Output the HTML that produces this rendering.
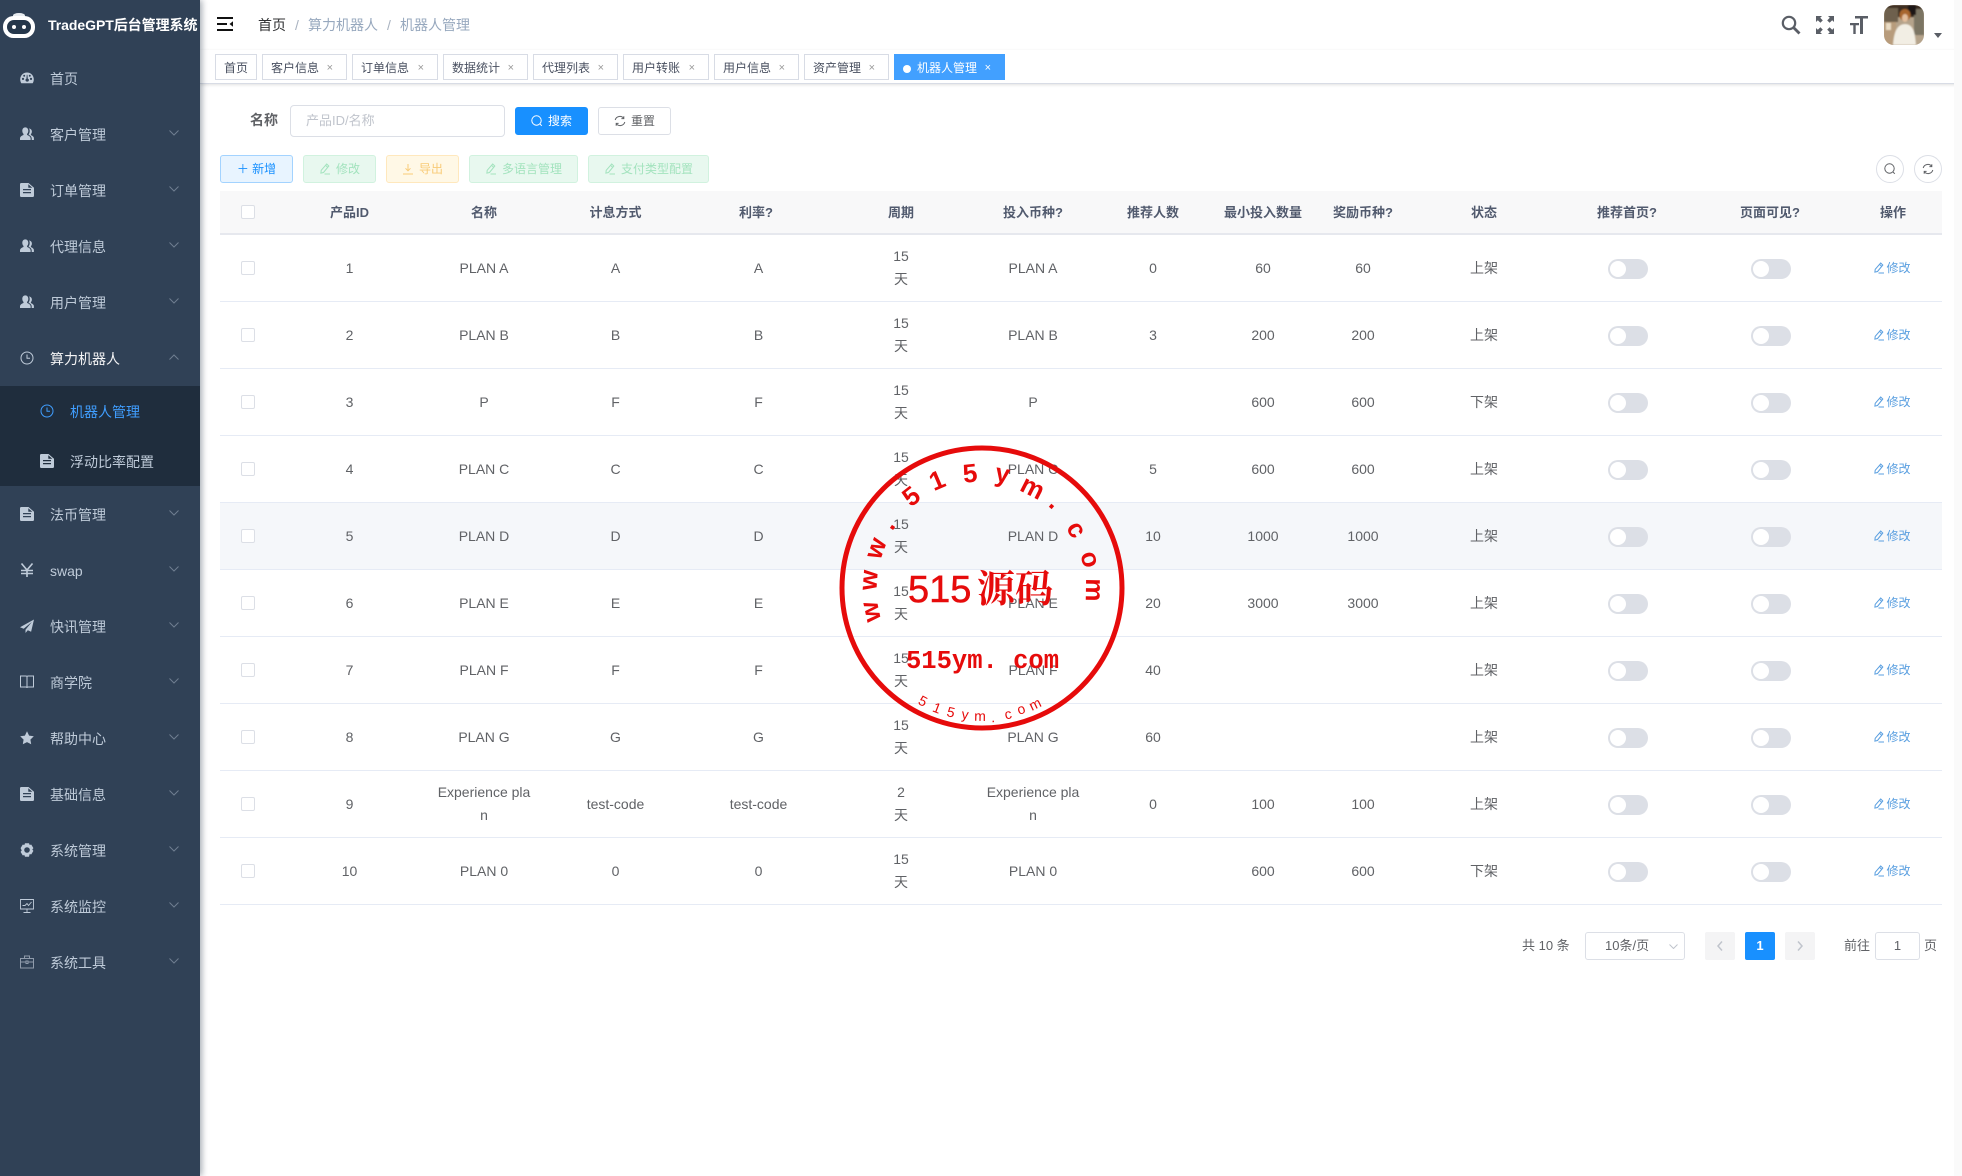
<!DOCTYPE html>
<html lang="zh">
<head>
<meta charset="utf-8">
<title>TradeGPT后台管理系统</title>
<style>
*{box-sizing:border-box}
html,body{margin:0;padding:0;width:1962px;height:1176px;overflow:hidden;background:#fff;font-family:"Liberation Sans","Noto Sans CJK SC",sans-serif;font-size:14px;color:#606266}
.abs,.side,.mi,.nav,.tags,.tag,.btn,.tb,.sw{position:absolute}
.side{left:0;top:0;width:200px;height:1176px;background:#304156;box-shadow:2px 0 6px rgba(0,21,41,.35);z-index:3}
.sub{position:absolute;left:0;top:386px;width:200px;height:100px;background:#1f2d3d}
.mi{left:50px;height:20px;line-height:20px;color:#bfcbd9;white-space:nowrap}
.ic{position:absolute;left:20px;width:14px;height:14px;fill:#bfcbd9;stroke:none}
.ch{position:absolute;left:169px;width:10px;height:6px;fill:none;stroke:#6f7e90;stroke-width:1}
.nav{left:200px;top:0;width:1762px;height:50px;background:#fff;box-shadow:0 1px 4px rgba(0,21,41,.08);z-index:1}
.tags{left:200px;top:50px;width:1762px;height:34px;background:#fff;border-bottom:1px solid #d8dce5;box-shadow:0 1px 3px rgba(0,0,0,.12);z-index:1}
.tag{top:54px;height:26px;line-height:26px;border:1px solid #d8dce5;background:#fff;color:#495060;font-size:12px;padding-left:8px;white-space:nowrap;z-index:2}
.tag i{position:absolute;right:13px;top:0;font-style:normal;font-size:11px;color:#999}
.tag.on{background:#42a0ff;border-color:#42a0ff;color:#fff}
.tag.on i{color:#fff}
.tag.on b{display:inline-block;width:8px;height:8px;border-radius:50%;background:#fff;margin-right:6px;vertical-align:-0.5px}
.btn{height:28px;line-height:26px;border:1px solid;border-radius:3px;font-size:12px;text-align:center;white-space:nowrap}
.btn svg{width:12px;height:12px;vertical-align:-2px;margin-right:5px;fill:none;stroke:currentColor;stroke-width:1}
.g{background:#e8f8ef;border-color:#d1f2df;color:#a3e3be}
.y{background:#fff8e6;border-color:#ffe8bd;color:#f8cb78}
.p{background:#e8f4ff;border-color:#a3d3ff;color:#1890ff}
table{position:absolute;left:220px;top:191px;width:1722px;table-layout:fixed;border-collapse:separate;border-spacing:0}
th{height:44px;background:#f8f8f9;border-bottom:2px solid #e6e8ee;color:#515a6e;font-size:13px;font-weight:bold;text-align:center;padding:0 0 2px}
th:nth-child(5){padding-right:4px}
td{height:67px;border-bottom:1px solid #e6ebf5;text-align:center;line-height:23px;padding:0;color:#606266}
tr.h td{background:#f5f7fa}
td:nth-child(2),td:nth-child(4),td:nth-child(5),th:nth-child(2),th:nth-child(4){padding-left:1px}
.c{display:inline-block;width:14px;height:14px;border:1px solid #dcdfe6;border-radius:2px;background:#fff;vertical-align:middle;position:relative;top:-1px}
th .c{top:0}
.s{display:inline-block;position:relative;width:40px;height:20px;border-radius:10px;background:#dcdfe6;vertical-align:middle;left:1px}
.s:after{content:"";position:absolute;left:2px;top:2px;width:16px;height:16px;border-radius:50%;background:#fff}
.e{color:#5a9fe0;font-size:12px;white-space:nowrap;position:relative;left:-1px}
.e svg{width:12px;height:12px;vertical-align:-2px;margin-right:1px;fill:none;stroke:currentColor;stroke-width:1}
.circ{position:absolute;top:155px;width:28px;height:28px;border:1px solid #dcdfe6;border-radius:50%;background:#fff}
.circ svg{position:absolute;left:7px;top:7px;width:12px;height:12px;fill:none;stroke:#606266;stroke-width:1}
.pg{position:absolute;top:932px;height:28px;line-height:28px;font-size:13px;color:#606266;white-space:nowrap}
.pb{position:absolute;top:932px;width:30px;height:28px;border-radius:2px;background:#f4f4f5;text-align:center;line-height:28px}
.pin{position:absolute;top:932px;height:28px;border:1px solid #dcdfe6;border-radius:3px;line-height:26px;font-size:13px;color:#606266;background:#fff;text-align:center}
.stamp{position:absolute;left:0;top:0;z-index:5;pointer-events:none}
</style>
</head>
<body>
<svg width="0" height="0" style="position:absolute">
<defs>
<symbol id="dash" viewBox="0 0 14 14"><path d="M7 1.500C3.200 1.500.2 4.600.2 8.400c0 1.400.4 2.700 1.100 3.800h11.400c.7-1.100 1.100-2.400 1.100-3.800 0-3.800-3-6.900-6.800-6.900zM3 9a1.100 1.100 0 1 1 0-2.200A1.100 1.100 0 0 1 3 9zm1.200-3.300a1 1 0 1 1 0-2 1 1 0 0 1 0 2zM7 10.600a1.500 1.500 0 0 1-.6-2.900l.4-3.900h.6l.4 3.900A1.500 1.500 0 0 1 7 10.600zM9.800 5.700a1 1 0 1 1 0-2 1 1 0 0 1 0 2zM11 9a1.100 1.100 0 1 1 0-2.200A1.100 1.100 0 0 1 11 9z"/></symbol>
<symbol id="ppl" viewBox="0 0 14 14"><path d="M5.300.4c1.900 0 3 1.500 3 3.500 0 1.300-.5 2.400-1.200 3v1.100c2 .6 3.500 1.900 3.500 3.400V13H0v-1.600c0-1.500 1.500-2.800 3.500-3.400V6.900c-.7-.6-1.200-1.700-1.200-3 0-2 1.100-3.500 3-3.500zM9.600 1.600c1.400.2 2.300 1.400 2.300 3 0 1-.4 1.900-1 2.500v1c1.700.5 3 1.700 3 3V13h-2.200v-1.600c0-1.500-1.200-2.900-3-3.700v-.4c.6-.8 1-1.900 1-3.200 0-1-.1-2-.8-3z"/></symbol>
<symbol id="doc" viewBox="0 0 14 14"><path fill-rule="evenodd" d="M1.200 0h7.300L14 4.800v7.900c0 .7-.6 1.300-1.300 1.300H1.300C.6 14 0 13.400 0 12.700V1.200C0 .5.500 0 1.200 0zM3 6v1.300h8V6H3zm0 3v1.300h8V9H3zM8.300 1.200v3.600h4z"/></symbol>
<symbol id="clk" viewBox="0 0 14 14"><g fill="none" stroke="#bfcbd9" stroke-width="1"><circle cx="7" cy="7" r="6"/><path d="M7 3.500V7.300h3"/></g></symbol>
<symbol id="clkb" viewBox="0 0 14 14"><g fill="none" stroke="#409eff" stroke-width="1"><circle cx="7" cy="7" r="6"/><path d="M7 3.500V7.300h3"/></g></symbol>
<symbol id="yen" viewBox="0 0 14 14"><path fill="none" stroke="#bfcbd9" stroke-width="1.600" d="M1.500.5L7 7l5.500-6.500M1 7.500h12M1 10.500h12M7 7v7"/></symbol>
<symbol id="pln" viewBox="0 0 14 14"><path d="M14 .5L0 8.200l3.700 1.500L12 2.800 5.500 10.700V14l2.300-2.700 3.300 1.500z"/></symbol>
<symbol id="bk" viewBox="0 0 14 14"><path fill="none" stroke="#bfcbd9" stroke-width="1" d="M.5 1h5.500c.6 0 1 .4 1 1 0-.6.400-1 1-1h5.500v11H8c-.6 0-1 .4-1 1 0-.6-.4-1-1-1H.5zM7 2v11"/></symbol>
<symbol id="st" viewBox="0 0 14 14"><path d="M7 .3l2.100 4.300 4.700.7-3.400 3.300.8 4.700L7 11.100l-4.200 2.200.8-4.700L.2 5.300l4.700-.7z"/></symbol>
<symbol id="gr" viewBox="0 0 14 14"><path fill-rule="evenodd" d="M5 .2h4l.6 1.700 1.700-.3 2.100 3.500-1.100 1.400 1.100 1.400-2.100 3.500-1.700-.3L9 13.800H5l-.6-1.700-1.700.3L.6 8.900l1.100-1.400L.6 5.100l2.100-3.500 1.700.3zM7 4.200a2.800 2.800 0 1 0 0 5.600 2.800 2.800 0 0 0 0-5.600z"/></symbol>
<symbol id="mon" viewBox="0 0 14 14"><path fill="none" stroke="#bfcbd9" stroke-width=".9" d="M.5.500h13v9.500H.5zM7 10v3M3.500 13.500h7M2.500 6.500l2.500 0 2-2 1.500 2 3-3.500"/></symbol>
<symbol id="tb" viewBox="0 0 14 14"><path fill="none" stroke="#8f9bab" stroke-width="1" d="M.5 3.500h13v9.500H.5zM4.500 3.500V1h5v2.500M.5 7h5.500M8 7h5.500M6 6h2v2.500H6z"/></symbol>
<symbol id="ed" viewBox="0 0 12 12"><path d="M7.700 1L9.800 3 4.500 9.500l-2.600.6.300-2.800zM6.600 2.300l2 2M5.500 11h5.500"/></symbol>
<symbol id="srch" viewBox="0 0 12 12"><circle cx="5.500" cy="5.500" r="4.700"/><path d="M9 9l1.800 1.800"/></symbol>
<symbol id="rf" viewBox="0 0 12 12"><path d="M1.200 5a4.800 4.800 0 0 1 8.600-1.500M10.800 7a4.800 4.800 0 0 1-8.600 1.500M9.800 1.200v2.400H7.400M2.200 10.800V8.400h2.400"/></symbol>
</defs>
</svg>

<div class="side">
  <svg class="abs" style="left:3px;top:12px" width="33" height="26" viewBox="0 0 33 26"><ellipse cx="16" cy="3.500" rx="6" ry="2.500" fill="#e8ecf0"/><rect x="0" y="4" width="32" height="22" rx="10.500" fill="#fff"/><rect x="4" y="8" width="24" height="14" rx="7" fill="#25374b"/><circle cx="11" cy="15" r="2" fill="#fff"/><circle cx="21" cy="15" r="2" fill="#fff"/></svg>
  <div class="abs" style="left:48px;top:15px;height:20px;line-height:20px;color:#fff;font-weight:bold;font-size:14px;white-space:nowrap;letter-spacing:-.05px">TradeGPT后台管理系统</div>
  <div class="sub"></div>

  <svg class="ic" style="top:71px"><use href="#dash"/></svg><div class="mi" style="top:69px">首页</div>
  <svg class="ic" style="top:127px"><use href="#ppl"/></svg><div class="mi" style="top:125px">客户管理</div><svg class="ch" style="top:130px" viewBox="0 0 10 6"><path d="M.5.500L5 5 9.500.5"/></svg>
  <svg class="ic" style="top:183px"><use href="#doc"/></svg><div class="mi" style="top:181px">订单管理</div><svg class="ch" style="top:186px" viewBox="0 0 10 6"><path d="M.5.500L5 5 9.500.5"/></svg>
  <svg class="ic" style="top:239px"><use href="#ppl"/></svg><div class="mi" style="top:237px">代理信息</div><svg class="ch" style="top:242px" viewBox="0 0 10 6"><path d="M.5.500L5 5 9.500.5"/></svg>
  <svg class="ic" style="top:295px"><use href="#ppl"/></svg><div class="mi" style="top:293px">用户管理</div><svg class="ch" style="top:298px" viewBox="0 0 10 6"><path d="M.5.500L5 5 9.500.5"/></svg>
  <svg class="ic" style="top:351px"><use href="#clk"/></svg><div class="mi" style="top:349px;color:#f4f4f5">算力机器人</div><svg class="ch" style="top:354px" viewBox="0 0 10 6"><path d="M.5 5.500L5 1l4.500 4.500"/></svg>
  <svg class="ic" style="top:404px;left:40px"><use href="#clkb"/></svg><div class="mi" style="top:402px;left:70px;color:#409eff">机器人管理</div>
  <svg class="ic" style="top:454px;left:40px"><use href="#doc"/></svg><div class="mi" style="top:452px;left:70px">浮动比率配置</div>
  <svg class="ic" style="top:507px"><use href="#doc"/></svg><div class="mi" style="top:505px">法币管理</div><svg class="ch" style="top:510px" viewBox="0 0 10 6"><path d="M.5.500L5 5 9.500.5"/></svg>
  <svg class="ic" style="top:563px"><use href="#yen"/></svg><div class="mi" style="top:561px">swap</div><svg class="ch" style="top:566px" viewBox="0 0 10 6"><path d="M.5.500L5 5 9.500.5"/></svg>
  <svg class="ic" style="top:619px"><use href="#pln"/></svg><div class="mi" style="top:617px">快讯管理</div><svg class="ch" style="top:622px" viewBox="0 0 10 6"><path d="M.5.500L5 5 9.500.5"/></svg>
  <svg class="ic" style="top:675px"><use href="#bk"/></svg><div class="mi" style="top:673px">商学院</div><svg class="ch" style="top:678px" viewBox="0 0 10 6"><path d="M.5.500L5 5 9.500.5"/></svg>
  <svg class="ic" style="top:731px"><use href="#st"/></svg><div class="mi" style="top:729px">帮助中心</div><svg class="ch" style="top:734px" viewBox="0 0 10 6"><path d="M.5.500L5 5 9.500.5"/></svg>
  <svg class="ic" style="top:787px"><use href="#doc"/></svg><div class="mi" style="top:785px">基础信息</div><svg class="ch" style="top:790px" viewBox="0 0 10 6"><path d="M.5.500L5 5 9.500.5"/></svg>
  <svg class="ic" style="top:843px"><use href="#gr"/></svg><div class="mi" style="top:841px">系统管理</div><svg class="ch" style="top:846px" viewBox="0 0 10 6"><path d="M.5.500L5 5 9.500.5"/></svg>
  <svg class="ic" style="top:899px"><use href="#mon"/></svg><div class="mi" style="top:897px">系统监控</div><svg class="ch" style="top:902px" viewBox="0 0 10 6"><path d="M.5.500L5 5 9.500.5"/></svg>
  <svg class="ic" style="top:955px"><use href="#tb"/></svg><div class="mi" style="top:953px">系统工具</div><svg class="ch" style="top:958px" viewBox="0 0 10 6"><path d="M.5.500L5 5 9.500.5"/></svg>
</div>

<div class="nav">
  <svg class="abs" style="left:17px;top:17px" width="16" height="14" viewBox="0 0 16 14"><path fill="#111" d="M0 0h16v2H0zM0 6h10v2H0zM0 12h16v2H0zM16 4.200v5.600L12.500 7z"/></svg>
  <div class="abs" style="left:58px;top:15px;line-height:20px;white-space:nowrap;color:#303133">首页</div>
  <div class="abs" style="left:95px;top:15px;line-height:20px;color:#a8b2c0">/</div>
  <div class="abs" style="left:108px;top:15px;line-height:20px;white-space:nowrap;color:#97a8be">算力机器人</div>
  <div class="abs" style="left:187px;top:15px;line-height:20px;color:#a8b2c0">/</div>
  <div class="abs" style="left:200px;top:15px;line-height:20px;white-space:nowrap;color:#97a8be">机器人管理</div>
  <svg class="abs" style="left:1581px;top:15px" width="20" height="20" viewBox="0 0 20 20"><circle cx="8" cy="8" r="6.200" fill="none" stroke="#5a5e66" stroke-width="2.200"/><path d="M12.500 12.500l6 6" stroke="#5a5e66" stroke-width="2.800"/></svg>
  <svg class="abs" style="left:1616px;top:16px" width="18" height="18" viewBox="0 0 18 18"><path fill="#5a5e66" d="M0 0h6L4.200 1.800 6.800 4.400 4.400 6.800 1.800 4.200 0 6zM18 0v6l-1.800-1.800-2.600 2.600-2.400-2.400 2.600-2.600L12 0zM0 18v-6l1.800 1.800 2.600-2.600 2.400 2.400-2.600 2.600L6 18zM18 18h-6l1.800-1.800-2.600-2.600 2.400-2.400 2.600 2.600L18 12z"/></svg>
  <svg class="abs" style="left:1650px;top:16px" width="18" height="18" viewBox="0 0 18 18"><path fill="#5a5e66" d="M5 0h13v2.500h-5V18h-3V2.500H5zM0 7h9v2.200H5.700V18H3.300V9.200H0z"/></svg>
  <svg class="abs" style="left:1684px;top:5px" width="40" height="40" viewBox="0 0 40 40">
    <defs><clipPath id="av"><rect width="40" height="40" rx="10"/></clipPath><filter id="bl"><feGaussianBlur stdDeviation=".8"/></filter></defs>
    <g clip-path="url(#av)">
      <rect width="40" height="40" fill="#b5a38b"/>
      <g filter="url(#bl)">
        <rect x="0" y="0" width="40" height="12" fill="#3c2f24"/>
        <rect x="0" y="3" width="14" height="14" fill="#6e604e"/>
        <rect x="30" y="4" width="10" height="26" fill="#7c7564"/>
        <rect x="0" y="17" width="12" height="23" fill="#b89c7c"/>
        <rect x="2" y="18" width="5" height="7" fill="#eadcc4"/>
        <rect x="24" y="0" width="8" height="10" fill="#1f1812"/>
        <path d="M9 40c1-13 4-21 12-21s10 8 11 21z" fill="#f2eee4"/>
        <ellipse cx="21" cy="10" rx="5.500" ry="6" fill="#a8662f"/>
        <ellipse cx="21" cy="13" rx="3" ry="4" fill="#e2bd9c"/>
      </g>
    </g>
  </svg>
  <svg class="abs" style="left:1734px;top:33px" width="8" height="5" viewBox="0 0 8 5"><path fill="#5a5e66" d="M0 0h8L4 5z"/></svg>
</div>
<div class="tags"></div>

<div class="tag" style="left:215px;width:42px">首页</div>
<div class="tag" style="left:262px;width:85px">客户信息<i>×</i></div>
<div class="tag" style="left:352px;width:86px">订单信息<i>×</i></div>
<div class="tag" style="left:443px;width:85px">数据统计<i>×</i></div>
<div class="tag" style="left:533px;width:85px">代理列表<i>×</i></div>
<div class="tag" style="left:623px;width:86px">用户转账<i>×</i></div>
<div class="tag" style="left:714px;width:85px">用户信息<i>×</i></div>
<div class="tag" style="left:804px;width:85px">资产管理<i>×</i></div>
<div class="tag on" style="left:894px;width:111px"><b></b>机器人管理<i>×</i></div>

<div class="abs" style="left:250px;top:110px;line-height:20px;font-weight:bold;color:#606266">名称</div>
<div class="abs" style="left:290px;top:105px;width:215px;height:32px;border:1px solid #dcdfe6;border-radius:4px;line-height:30px;padding-left:15px;color:#c0c4cc;font-size:13px">产品ID/名称</div>
<div class="btn" style="left:515px;top:107px;width:73px;background:#1890ff;border-color:#1890ff;color:#fff"><svg><use href="#srch"/></svg>搜索</div>
<div class="btn" style="left:598px;top:107px;width:73px;background:#fff;border-color:#dcdfe6;color:#606266"><svg><use href="#rf"/></svg>重置</div>

<div class="btn p" style="left:220px;top:155px;width:73px">＋ 新增</div>
<div class="btn g" style="left:303px;top:155px;width:73px"><svg><use href="#ed"/></svg>修改</div>
<div class="btn y" style="left:386px;top:155px;width:73px"><svg viewBox="0 0 12 12"><path d="M6 1v6.500M3.500 5.300L6 7.800l2.500-2.500M1 11h10"/></svg>导出</div>
<div class="btn g" style="left:469px;top:155px;width:109px"><svg><use href="#ed"/></svg>多语言管理</div>
<div class="btn g" style="left:588px;top:155px;width:121px"><svg><use href="#ed"/></svg>支付类型配置</div>

<div class="circ" style="left:1876px"><svg><use href="#srch"/></svg></div>
<div class="circ" style="left:1914px"><svg><use href="#rf"/></svg></div>

<table>
<colgroup><col style="width:56px"><col style="width:146px"><col style="width:124px"><col style="width:138px"><col style="width:148px"><col style="width:138px"><col style="width:126px"><col style="width:114px"><col style="width:106px"><col style="width:94px"><col style="width:148px"><col style="width:138px"><col style="width:148px"><col style="width:98px"></colgroup>
<thead><tr><th><span class="c"></span></th><th>产品ID</th><th>名称</th><th>计息方式</th><th>利率?</th><th>周期</th><th>投入币种?</th><th>推荐人数</th><th>最小投入数量</th><th>奖励币种?</th><th>状态</th><th>推荐首页?</th><th>页面可见?</th><th>操作</th></tr></thead>
<tbody>
<tr><td><span class="c"></span></td><td>1</td><td>PLAN A</td><td>A</td><td>A</td><td>15<br>天</td><td>PLAN A</td><td>0</td><td>60</td><td>60</td><td>上架</td><td><span class="s"></span></td><td><span class="s"></span></td><td><span class="e"><svg><use href="#ed"/></svg>修改</span></td></tr>
<tr><td><span class="c"></span></td><td>2</td><td>PLAN B</td><td>B</td><td>B</td><td>15<br>天</td><td>PLAN B</td><td>3</td><td>200</td><td>200</td><td>上架</td><td><span class="s"></span></td><td><span class="s"></span></td><td><span class="e"><svg><use href="#ed"/></svg>修改</span></td></tr>
<tr><td><span class="c"></span></td><td>3</td><td>P</td><td>F</td><td>F</td><td>15<br>天</td><td>P</td><td></td><td>600</td><td>600</td><td>下架</td><td><span class="s"></span></td><td><span class="s"></span></td><td><span class="e"><svg><use href="#ed"/></svg>修改</span></td></tr>
<tr><td><span class="c"></span></td><td>4</td><td>PLAN C</td><td>C</td><td>C</td><td>15<br>天</td><td>PLAN C</td><td>5</td><td>600</td><td>600</td><td>上架</td><td><span class="s"></span></td><td><span class="s"></span></td><td><span class="e"><svg><use href="#ed"/></svg>修改</span></td></tr>
<tr class="h"><td><span class="c"></span></td><td>5</td><td>PLAN D</td><td>D</td><td>D</td><td>15<br>天</td><td>PLAN D</td><td>10</td><td>1000</td><td>1000</td><td>上架</td><td><span class="s"></span></td><td><span class="s"></span></td><td><span class="e"><svg><use href="#ed"/></svg>修改</span></td></tr>
<tr><td><span class="c"></span></td><td>6</td><td>PLAN E</td><td>E</td><td>E</td><td>15<br>天</td><td>PLAN E</td><td>20</td><td>3000</td><td>3000</td><td>上架</td><td><span class="s"></span></td><td><span class="s"></span></td><td><span class="e"><svg><use href="#ed"/></svg>修改</span></td></tr>
<tr><td><span class="c"></span></td><td>7</td><td>PLAN F</td><td>F</td><td>F</td><td>15<br>天</td><td>PLAN F</td><td>40</td><td></td><td></td><td>上架</td><td><span class="s"></span></td><td><span class="s"></span></td><td><span class="e"><svg><use href="#ed"/></svg>修改</span></td></tr>
<tr><td><span class="c"></span></td><td>8</td><td>PLAN G</td><td>G</td><td>G</td><td>15<br>天</td><td>PLAN G</td><td>60</td><td></td><td></td><td>上架</td><td><span class="s"></span></td><td><span class="s"></span></td><td><span class="e"><svg><use href="#ed"/></svg>修改</span></td></tr>
<tr><td><span class="c"></span></td><td>9</td><td>Experience pla<br>n</td><td>test-code</td><td>test-code</td><td>2<br>天</td><td>Experience pla<br>n</td><td>0</td><td>100</td><td>100</td><td>上架</td><td><span class="s"></span></td><td><span class="s"></span></td><td><span class="e"><svg><use href="#ed"/></svg>修改</span></td></tr>
<tr><td><span class="c"></span></td><td>10</td><td>PLAN 0</td><td>0</td><td>0</td><td>15<br>天</td><td>PLAN 0</td><td></td><td>600</td><td>600</td><td>下架</td><td><span class="s"></span></td><td><span class="s"></span></td><td><span class="e"><svg><use href="#ed"/></svg>修改</span></td></tr>
</tbody>
</table>

<div class="pg" style="left:1522px">共 10 条</div>
<div class="pin" style="left:1585px;width:100px;text-align:left;padding-left:19px">10条/页<svg class="abs" style="left:83px;top:11px" width="9" height="5" viewBox="0 0 9 5"><path d="M.5.500L4.500 4.500 8.500.5" fill="none" stroke="#c0c4cc"/></svg></div>
<div class="pb" style="left:1705px"><svg width="8" height="12" viewBox="0 0 8 12" style="vertical-align:-1px"><path d="M6 1.500L2 6l4 4.500" fill="none" stroke="#c0c4cc" stroke-width="1.500"/></svg></div>
<div class="pb" style="left:1745px;background:#1890ff;color:#fff;font-weight:bold;font-size:13px">1</div>
<div class="pb" style="left:1785px"><svg width="8" height="12" viewBox="0 0 8 12" style="vertical-align:-1px"><path d="M2 1.500L6 6l-4 4.500" fill="none" stroke="#c0c4cc" stroke-width="1.500"/></svg></div>
<div class="pg" style="left:1844px">前往</div>
<div class="pin" style="left:1875px;width:45px">1</div>
<div class="pg" style="left:1924px">页</div>

<div class="abs" style="left:1954px;top:0;width:8px;height:1176px;background:#fafafa;z-index:4"></div>

<svg class="stamp" width="1962" height="1176" viewBox="0 0 1962 1176">
  <circle cx="982" cy="588" r="140" fill="none" stroke="#e60b0b" stroke-width="5"/>
  <g fill="#e60b0b" font-family="'Liberation Sans',sans-serif" font-weight="bold" font-size="26" text-anchor="middle">
    <text transform="translate(870,612) rotate(-102)" dy=".35em">w</text>
    <text transform="translate(868,580) rotate(-86)" dy=".35em">w</text>
    <text transform="translate(875,548) rotate(-70)" dy=".35em">w</text>
    <text transform="translate(892,527) rotate(-56)" dy=".1em">.</text>
    <text transform="translate(911,496) rotate(-38)" dy=".35em">5</text>
    <text transform="translate(937,480) rotate(-23)" dy=".35em">1</text>
    <text transform="translate(970,473) rotate(-6)" dy=".35em">5</text>
    <text transform="translate(1002,477) rotate(10)" dy=".2em">y</text>
    <text transform="translate(1033,487) rotate(27)" dy=".35em">m</text>
    <text transform="translate(1052,506) rotate(40)" dy=".1em">.</text>
    <text transform="translate(1077,529) rotate(58)" dy=".35em">c</text>
    <text transform="translate(1091,559) rotate(75)" dy=".35em">o</text>
    <text transform="translate(1095,590) rotate(91)" dy=".35em">m</text>
  </g>
  <g fill="#e60b0b" font-family="'Liberation Sans',sans-serif" font-size="14" text-anchor="middle">
    <text transform="translate(923,701) rotate(28)" dy=".35em">5</text>
    <text transform="translate(937,708) rotate(21)" dy=".35em">1</text>
    <text transform="translate(951,712) rotate(14)" dy=".35em">5</text>
    <text transform="translate(965,715) rotate(8)" dy=".3em">y</text>
    <text transform="translate(980,716) rotate(1)" dy=".35em">m</text>
    <text transform="translate(993,718) rotate(-5)" dy=".3em">.</text>
    <text transform="translate(1008,714) rotate(-12)" dy=".35em">c</text>
    <text transform="translate(1021,709) rotate(-18)" dy=".35em">o</text>
    <text transform="translate(1035,704) rotate(-26)" dy=".35em">m</text>
  </g>
  <text x="908" y="602" fill="#e60b0b" stroke="#e60b0b" stroke-width=".5" font-family="'Liberation Sans',sans-serif" font-size="38">515</text>
  <text x="977" y="602" fill="#e60b0b" font-family="'Noto Serif CJK SC',serif" font-weight="bold" font-size="38">源码</text>
  <text x="906" y="668" fill="#e60b0b" font-family="'Liberation Mono',monospace" font-weight="bold" font-size="25.500">515ym. com</text>
</svg>
</body>
</html>
